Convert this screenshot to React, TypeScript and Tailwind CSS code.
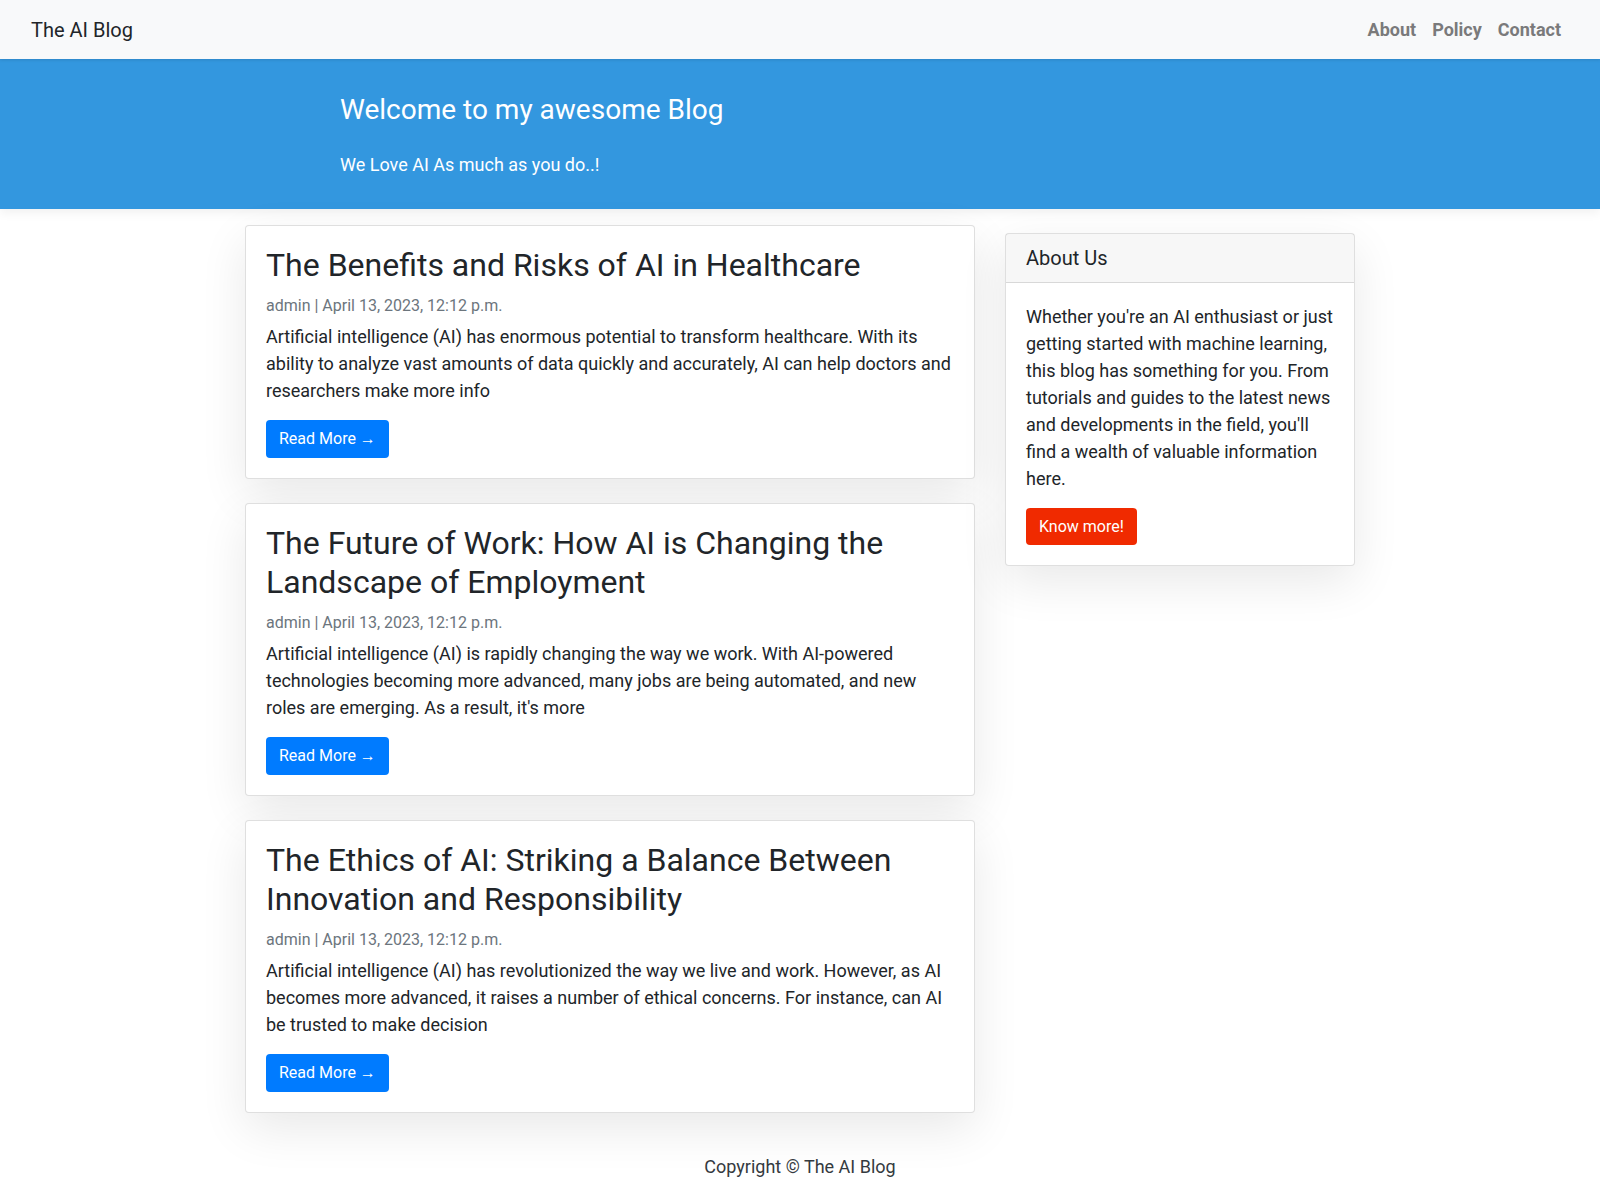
import React from 'react';

type Post = {
  title: string;
  excerpt: string;
};

const posts: Post[] = [
  {
    title: 'The Benefits and Risks of AI in Healthcare',
    excerpt:
      'Artificial intelligence (AI) has enormous potential to transform healthcare. With its ability to analyze vast amounts of data quickly and accurately, AI can help doctors and researchers make more info',
  },
  {
    title: 'The Future of Work: How AI is Changing the Landscape of Employment',
    excerpt:
      "Artificial intelligence (AI) is rapidly changing the way we work. With AI-powered technologies becoming more advanced, many jobs are being automated, and new roles are emerging. As a result, it's more",
  },
  {
    title: 'The Ethics of AI: Striking a Balance Between Innovation and Responsibility',
    excerpt:
      'Artificial intelligence (AI) has revolutionized the way we live and work. However, as AI becomes more advanced, it raises a number of ethical concerns. For instance, can AI be trusted to make decision',
  },
];

function Navbar() {
  return (
    <nav className="relative z-10 flex h-[59px] items-center justify-between bg-[#f8f9fa] pl-[31px] pr-[39px] shadow-[0_1px_3px_rgba(0,0,0,0.12)]">
      <a className="text-[20px] leading-[30px] text-[#212529]">The AI Blog</a>
      <ul className="-mr-2 flex items-center">
        {['About', 'Policy', 'Contact'].map((item) => (
          <li key={item}>
            <a className="block px-2 text-[18px] font-bold leading-[27px] text-[#7a7a7b]">{item}</a>
          </li>
        ))}
      </ul>
    </nav>
  );
}

function Banner() {
  return (
    <header className="h-[150px] bg-[#3397df] pl-[340px] pt-[34px] text-white shadow-[0_4px_10px_rgba(0,0,0,0.06)]">
      <h1 className="text-[28px] leading-[33.6px]">Welcome to my awesome Blog</h1>
      <p className="mt-[24px] text-[18px] leading-[27px]">We Love AI As much as you do..!</p>
    </header>
  );
}

function PostCard({ post }: { post: Post }) {
  return (
    <div className="rounded border border-black/[0.125] bg-white shadow-[0_1rem_3rem_rgba(0,0,0,0.09)]">
      <div className="p-5">
        <h2 className="mb-[10px] text-[32px] leading-[38.4px] text-[#212529]">{post.title}</h2>
        <p className="text-[16px] leading-[24px] text-[#6c757d]">admin | April 13, 2023, 12:12 p.m.</p>
        <p className="mb-4 mt-[5px] text-[18px] leading-[27px] text-[#212529]">{post.excerpt}</p>
        <a className="inline-block rounded bg-[#007bff] px-[13px] text-[16px] leading-[38px] text-white">Read More &rarr;</a>
      </div>
    </div>
  );
}

function Sidebar() {
  return (
    <div className="rounded border border-black/[0.125] bg-white shadow-[0_1rem_3rem_rgba(0,0,0,0.09)]">
      <div className="border-b border-black/[0.125] bg-black/[0.03] px-5 py-3">
        <h5 className="text-[20px] leading-[24px] text-[#212529]">About Us</h5>
      </div>
      <div className="p-5">
        <p className="mb-4 text-[18px] leading-[27px] text-[#212529]">
          Whether you're an AI enthusiast or just getting started with machine learning, this blog has something for
          you. From tutorials and guides to the latest news and developments in the field, you'll find a wealth of
          valuable information here.
        </p>
        <a className="inline-block rounded bg-[#f02a00] px-[13px] text-[16px] leading-[37px] text-white">Know more!</a>
      </div>
    </div>
  );
}

export default function App() {
  return (
    <div className="min-h-[1196px] bg-white font-['Roboto',sans-serif] text-[#212529]">
      <Navbar />
      <Banner />
      <main className="mx-auto flex w-[1110px] gap-[30px]">
        <div className="mt-4 flex w-[730px] flex-col gap-6">
          {posts.map((post) => (
            <PostCard key={post.title} post={post} />
          ))}
        </div>
        <aside className="mt-6 w-[350px]">
          <Sidebar />
        </aside>
      </main>
      <footer className="pb-6 pt-[40px] text-center">
        <p className="text-[18px] leading-[27px] text-[#343a40]">Copyright &copy; The AI Blog</p>
      </footer>
    </div>
  );
}
